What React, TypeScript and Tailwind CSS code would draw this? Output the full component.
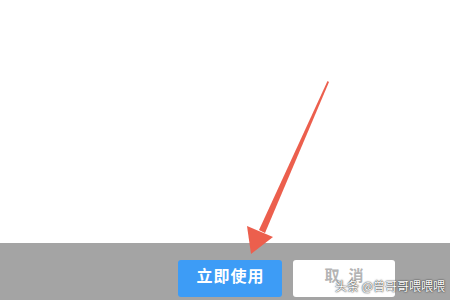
import React from 'react';

const App: React.FC = () => {
  return (
    <div className="relative w-[450px] h-[300px] overflow-hidden bg-white flex flex-col" style={{ fontFamily: '"Noto Sans CJK SC", "Noto Sans", sans-serif' }}>
      {/* Page body */}
      <div className="flex-1 bg-white" />

      {/* Footer bar */}
      <div className="h-[57px] bg-[#a4a4a4] flex items-start pl-[178px] pt-[17px] gap-[11px]">
        <button className="w-[104px] h-[37px] rounded-[3px] bg-[#3d9cf6] text-white text-[16px] font-bold tracking-[1px] leading-[20px] flex items-center justify-center pb-[7px] pl-[1px]">
          立即使用
        </button>
        <button className="w-[102px] h-[37px] rounded-[3px] bg-white text-[#b4b4b4] text-[15px] font-bold tracking-[9px] leading-[20px] flex items-center justify-center pb-[7px] pl-[9px]">
          取消
        </button>
      </div>

      {/* Watermark */}
      <div className="absolute left-[335px] top-[280px] text-[12px] text-white leading-none whitespace-nowrap" style={{ textShadow: '0 0 2px #333, 0 0 1px #333' }}>
        头条 @曾哥哥喂喂喂
      </div>

      {/* Arrow */}
      <svg className="absolute left-0 top-0" width="450" height="300" viewBox="0 0 450 300">
        <defs>
          <filter id="blur" x="-10%" y="-10%" width="120%" height="120%">
            <feGaussianBlur stdDeviation="0.6" />
          </filter>
        </defs>
        <g filter="url(#blur)" fill="#ec5f4e">
          <polygon points="327.5,81 329,82 265,233 259,230" />
          <polygon points="247,226 273,237 251,254" />
        </g>
      </svg>
    </div>
  );
};

export default App;
